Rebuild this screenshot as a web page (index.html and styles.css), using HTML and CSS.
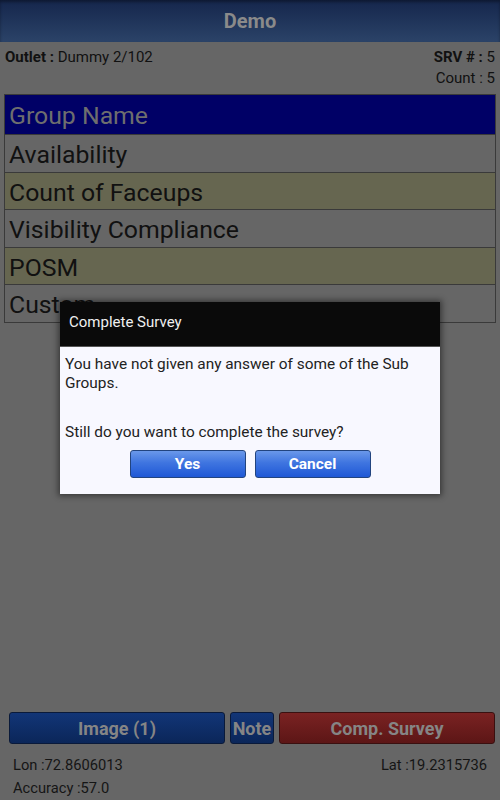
FILE: index.html
```html
<!DOCTYPE html>
<html>
<head>
<meta charset="utf-8">
<link rel="stylesheet" href="styles.css">
</head>
<body>
<div class="screen">
  <header class="appbar">Demo</header>
  <section class="info">
    <div class="info-row">
      <span><b>Outlet :</b> Dummy 2/102</span>
      <span><b>SRV # :</b> 5</span>
    </div>
    <div class="info-row info-right">
      <span>Count : 5</span>
    </div>
  </section>
  <div class="table">
    <div class="row row-head">Group Name</div>
    <div class="row">Availability</div>
    <div class="row row-alt">Count of Faceups</div>
    <div class="row">Visibility Compliance</div>
    <div class="row row-alt">POSM</div>
    <div class="row row-last">Custom</div>
  </div>
  <div class="spacer"></div>
  <div class="actions">
    <div class="btn btn-blue btn-image">Image (1)</div>
    <div class="btn btn-blue btn-note">Note</div>
    <div class="btn btn-red btn-comp">Comp. Survey</div>
  </div>
  <div class="geo">
    <div class="geo-row"><span>Lon :72.8606013</span><span>Lat :19.2315736</span></div>
    <div class="geo-row"><span>Accuracy :57.0</span></div>
  </div>

  <div class="dialog">
    <div class="dialog-title">Complete Survey</div>
    <div class="dialog-body">
      <p class="msg">You have not given any answer of some of the Sub Groups.</p>
      <p class="msg msg-q">Still do you want to complete the survey?</p>
      <div class="dialog-buttons">
        <div class="dbtn">Yes</div>
        <div class="dbtn">Cancel</div>
      </div>
    </div>
  </div>
</div>
</body>
</html>
```
FILE: styles.css
```css
html, body {
  margin: 0;
  padding: 0;
}
body {
  background: #666666;
  font-family: Roboto, "Noto Sans", sans-serif;
  color: #111;
}
.screen {
  position: relative;
  width: 500px;
  height: 800px;
  display: flex;
  flex-direction: column;
  overflow: hidden;
  background: #666666;
}
.appbar {
  height: 42px;
  flex: none;
  background: linear-gradient(#15264c, #2b4368);
  color: #8a8a8a;
  font-weight: bold;
  font-size: 20px;
  display: flex;
  align-items: center;
  justify-content: center;
  box-shadow: inset 0 2px 3px rgba(0,0,0,0.35);
}
.info {
  padding: 5px 5px 0 5px;
  font-size: 15px;
  color: #111;
  height: 52px;
  box-sizing: border-box;
}
.info-row {
  display: flex;
  justify-content: space-between;
  height: 21px;
  line-height: 21px;
}
.info-right {
  justify-content: flex-end;
}
.table {
  margin: 0 4px;
  border: 1px solid #3a3a3a;
  border-bottom: none;
}
.row {
  height: 36.5px;
  line-height: 39px;
  padding-left: 4px;
  font-size: 24.8px;
  color: #111;
  background: #666666;
  border-bottom: 1px solid #3a3a3a;
  white-space: nowrap;
}
.row-head {
  height: 39px;
  line-height: 42px;
  background: #000066;
  color: #6e6e6e;
}
.row-alt {
  background: #666650;
}
.spacer {
  flex: 1;
}
.actions {
  display: flex;
  gap: 5px;
  padding: 0 5px 0 9px;
  height: 32px;
}
.btn {
  height: 32px;
  box-sizing: border-box;
  border-radius: 3px;
  color: #858585;
  font-weight: bold;
  font-size: 18px;
  display: flex;
  align-items: center;
  justify-content: center;
}
.btn-blue {
  background: linear-gradient(#123577, #0b2659);
  border: 1px solid #0a1a3a;
}
.btn-red {
  background: linear-gradient(#7a2222, #5c1616);
  border: 1px solid #3a1010;
}
.btn-image { width: 216px; }
.btn-note { width: 44px; }
.btn-comp { flex: 1; }
.geo {
  padding: 10px 13px 0 13px;
  font-size: 14.7px;
  color: #151515;
}
.geo-row {
  display: flex;
  justify-content: space-between;
  height: 23px;
  line-height: 23px;
}
.dialog {
  position: absolute;
  left: 60px;
  top: 302px;
  width: 380px;
  background: #f8f8ff;
  box-shadow: 0 0 6px 2px rgba(0,0,0,0.45);
}
.dialog-title {
  height: 45px;
  background: #0a0a0a;
  color: #f0f0f0;
  font-size: 15px;
  display: flex;
  align-items: center;
  padding-left: 9px;
  padding-bottom: 4px;
  border-bottom: 1px solid #555;
  box-sizing: border-box;
}
.dialog-body {
  padding: 8px 5px 16px 5px;
}
.msg {
  margin: 0;
  font-size: 15.4px;
  line-height: 19px;
  color: #222;
}
.msg-q {
  margin-top: 30px;
}
.dialog-buttons {
  display: flex;
  justify-content: center;
  gap: 9px;
  margin-top: 8px;
}
.dbtn {
  width: 116px;
  height: 28px;
  box-sizing: border-box;
  border: 1px solid #22447f;
  border-radius: 3px;
  background: linear-gradient(#6a98ea, #3f75e0 45%, #1f58d6);
  color: #fff;
  font-weight: bold;
  font-size: 15.5px;
  display: flex;
  align-items: center;
  justify-content: center;
}
```
